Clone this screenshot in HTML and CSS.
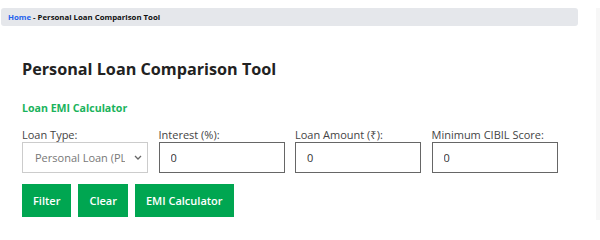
FILE: index.html
```html
<!DOCTYPE html>
<html lang="en">
<head>
<meta charset="utf-8">
<title>Personal Loan Comparison Tool</title>
<link rel="stylesheet" href="styles.css">
</head>
<body>
<div class="page">
  <main class="main">
    <nav class="breadcrumb"><a href="#" class="crumb-link">Home</a> - Personal Loan Comparison Tool</nav>
    <section class="content">
      <h1 class="title">Personal Loan Comparison Tool</h1>
      <h2 class="subtitle">Loan EMI Calculator</h2>
      <div class="fields">
        <label class="field">
          <span class="field-label">Loan Type:</span>
          <select class="control select">
            <option>Personal Loan (PL)</option>
          </select>
        </label>
        <label class="field">
          <span class="field-label">Interest (%):</span>
          <input class="control input" type="text" value="0">
        </label>
        <label class="field">
          <span class="field-label">Loan Amount (₹):</span>
          <input class="control input" type="text" value="0">
        </label>
        <label class="field">
          <span class="field-label">Minimum CIBIL Score:</span>
          <input class="control input" type="text" value="0">
        </label>
      </div>
      <div class="actions">
        <button class="btn" type="button">Filter</button>
        <button class="btn" type="button">Clear</button>
        <button class="btn" type="button">EMI Calculator</button>
      </div>
    </section>
  </main>
  <aside class="side"></aside>
</div>
</body>
</html>
```
FILE: styles.css
```css
* { box-sizing: border-box; }
html, body { margin: 0; padding: 0; background: #fff; }
body { font-family: "Open Sans", "Noto Sans", sans-serif; color: #222; }

.page {
  display: flex;
  align-items: flex-start;
  padding-top: 8px;
}
.main {
  width: 577px;
  margin-left: 1px;
}
.side {
  margin-left: 18px;
  width: 4px;
  height: 212px;
  background: #f7f7f7;
}

.breadcrumb {
  height: 18px;
  line-height: 18px;
  background: #e5e7eb;
  border-radius: 3px;
  padding-left: 7px;
  font-size: 7.8px;
  font-weight: 700;
  color: #111;
}
.crumb-link { color: #2563eb; text-decoration: none; }

.content { padding-left: 21px; }

.title {
  margin: 32px 0 0;
  font-size: 16.2px;
  line-height: 22px;
  font-weight: 700;
  color: #222;
}
.subtitle {
  margin: 20px 0 0;
  font-size: 10.6px;
  line-height: 16px;
  font-weight: 700;
  color: #1ab35c;
}

.fields {
  display: grid;
  grid-template-columns: repeat(4, 126px);
  column-gap: 10.5px;
  margin-top: 11px;
}
.field { display: flex; flex-direction: column; }
.field-label {
  font-size: 11px;
  line-height: 15px;
  color: #444;
}
.control {
  height: 31px;
  width: 100%;
  font-family: inherit;
  font-size: 11px;
  border-radius: 0;
  margin: 0;
}
.input {
  border: 1px solid #666;
  padding: 0 11px;
  color: #333;
  background: #fff;
}
.select {
  appearance: none;
  -webkit-appearance: none;
  border: 1px solid #ccc;
  padding: 0 22px 0 12px;
  color: #777;
  background: #fff url("data:image/svg+xml,%3Csvg xmlns='http://www.w3.org/2000/svg' width='8' height='5' viewBox='0 0 8 5'%3E%3Cpath d='M1 1l3 3 3-3' fill='none' stroke='%23666' stroke-width='1.3'/%3E%3C/svg%3E") no-repeat right 5px center;
  text-align: center;
}

.actions {
  display: flex;
  gap: 7px;
  margin-top: 11px;
}
.btn {
  height: 33px;
  padding: 0 11px;
  border: 0;
  border-radius: 0;
  background: #00a651;
  color: #fff;
  font-family: inherit;
  font-size: 11px;
  font-weight: 600;
}
```
